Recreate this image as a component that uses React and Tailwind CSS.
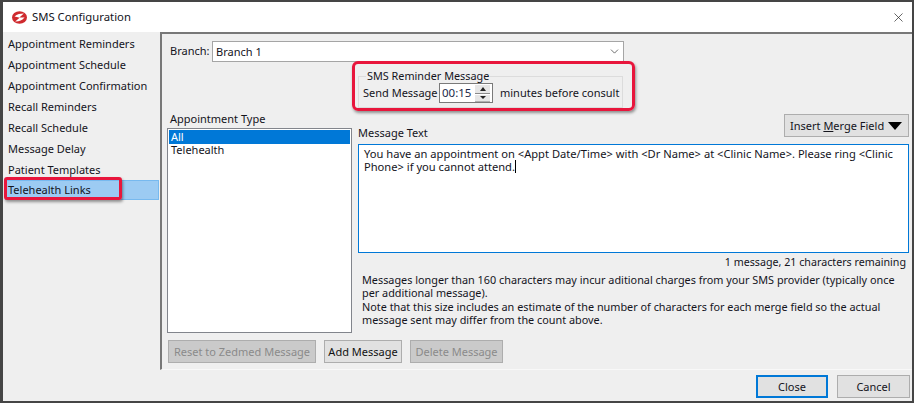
import React from "react";
import { X, ChevronDown } from "lucide-react";

const font = "font-['Noto_Sans',sans-serif] text-[11px] leading-[14px] text-[#14141c] whitespace-nowrap";

const navItems = [
  "Appointment Reminders",
  "Appointment Schedule",
  "Appointment Confirmation",
  "Recall Reminders",
  "Recall Schedule",
  "Message Delay",
  "Patient Templates",
  "Telehealth Links",
];

function Logo() {
  return (
    <svg width="15" height="13" viewBox="0 0 15 13" className="shrink-0">
      <ellipse cx="7.5" cy="6.5" rx="7.5" ry="6.2" fill="#cf2a2e" />
      <path d="M2.5 5.6 C5 3.2 8.5 2.6 11.8 2.6 L7.4 6.4 C9.2 6.6 11 6.6 12.6 6.2 C10.5 9.4 6.5 10.6 3.2 10.4 L7.6 6.8 C5.8 6.2 4 5.8 2.5 5.6 Z" fill="#fff" />
    </svg>
  );
}

function GrayButton({ className, children }) {
  return (
    <div className={`flex h-[23px] items-center justify-center border border-[#adadad] bg-[#cacaca] text-[#8a8a8a] ${className}`}>
      {children}
    </div>
  );
}

export default function App() {
  return (
    <div className={`relative flex h-[403px] w-[914px] flex-col overflow-hidden border-x-[2px] border-y-[2px] border-l-[3px] border-[#454545] bg-[#efefef] ${font}`}>
      <div className="flex h-[30px] shrink-0 items-center bg-white pl-[9px] pr-[5px]">
        <Logo />
        <span className="ml-[5px] pb-[1px] text-[11.3px]">SMS Configuration</span>
        <X className="ml-auto mr-[1px] text-[#222]" size={15} strokeWidth={1.1} />
      </div>

      <div className="flex h-[338px] shrink-0">
        <nav className="flex w-[157px] shrink-0 flex-col pt-px">
          {navItems.map((item, i) => (
            <div
              key={item}
              className={
                i === 7
                  ? "ml-[2px] mr-[1px] flex h-[20px] items-center border border-[#77b9ef] bg-[#9ccbf3] pl-[2px]"
                  : "flex h-[21px] items-center pl-[5px]"
              }
            >
              {item}
            </div>
          ))}
        </nav>

        <main className="flex-1 border-b border-l-2 border-t-2 border-[#787878] border-b-[#f8f8f8]">
          <div className="ml-[8px] mt-[7px] flex h-[21px] items-center">
            <span className="w-[42px] pb-[2px]">Branch:</span>
            <div className="flex h-[21px] w-[412px] items-center border border-[#a5a5a5] bg-white pl-[3px] pr-[2px]">
              Branch 1
              <ChevronDown className="ml-auto text-[#333]" size={13} strokeWidth={1.3} />
            </div>
          </div>

          <fieldset className="ml-[196px] mt-[7px] h-[39px] w-[265px] border border-[#dcdcdc] pl-[4px]">
            <legend className="ml-[3px] px-[1px] text-[10.85px]">SMS Reminder Message</legend>
            <div className="flex h-[20px] items-center">
              <span className="w-[76px] shrink-0">Send Message</span>
              <div className="flex h-[20px] w-[54px] shrink-0 items-center border border-[#7a7a7a] bg-white pl-[2px] pr-[2px]">
                <span className="text-[11.5px] text-[#1c2a4a]">00:15</span>
                <div className="ml-auto flex flex-col gap-px">
                  <div className="flex h-[9px] w-[15px] items-center justify-center border-b border-[#8a8a8a] bg-[#e6e6e6]">
                    <div className="h-0 w-0 border-x-[3.5px] border-b-[4px] border-x-transparent border-b-[#222]" />
                  </div>
                  <div className="flex h-[7px] w-[15px] items-center justify-center border-b border-[#b0b0b0] bg-[#e6e6e6]">
                    <div className="h-0 w-0 border-x-[3.5px] border-t-[3px] border-x-transparent border-t-[#222]" />
                  </div>
                </div>
              </div>
              <span className="ml-[7px]">minutes before consult</span>
            </div>
          </fieldset>

          <div className="flex pl-[5px]">
            <div className="mt-[4px] flex w-[185px] shrink-0 flex-col">
              <div className="pl-[3px]">Appointment Type</div>
              <div className="mt-[2px] h-[205px] border border-[#82858c] bg-white px-[1px] pt-px">
                <div className="flex h-[14px] items-center bg-[#0078d7] pl-[2px] text-white">All</div>
                <div className="flex h-[13px] items-center pb-px pl-[2px]">Telehealth</div>
              </div>
              <div className="mt-[7px] flex w-[340px] gap-[8px] pl-px">
                <GrayButton className="w-[148px]">Reset to Zedmed Message</GrayButton>
                <div className="flex h-[23px] w-[78px] items-center justify-center border border-[#adadad] bg-[#e1e1e1] text-[#111]">Add Message</div>
                <GrayButton className="w-[93px]">Delete Message</GrayButton>
              </div>
            </div>

            <div className="ml-[6px] mt-[6px] w-[551px]">
              <div className="flex h-[30px] items-start">
                <span className="mt-[12px]">Message Text</span>
                <div className="ml-auto flex h-[23px] w-[125px] items-center border border-[#adadad] bg-[#e1e1e1] pl-[5px]">
                  <span>Insert <span className="underline">M</span>erge Field</span>
                  <div className="ml-[4px] h-0 w-0 border-x-[7px] border-t-[8px] border-x-transparent border-t-black" />
                </div>
              </div>
              <div className="h-[109px] border border-[#0078d7] bg-white pl-[5px] pt-[2px] text-[11.15px] leading-[13px]">
                You have an appointment on &lt;Appt Date/Time&gt; with &lt;Dr Name&gt; at &lt;Clinic Name&gt;. Please ring &lt;Clinic
                <br />
                Phone&gt; if you cannot attend.
                <span className="inline-block h-[13px] w-px align-top bg-black" />
              </div>
              <div className="mt-[2px] pr-[3px] text-right text-[10.7px]">1 message, 21 characters remaining</div>
              <p className="mt-[4px] pl-[4px] text-[10.85px] leading-[13.4px]">
                Messages longer than 160 characters may incur aditional charges from your SMS provider (typically once
                <br />
                per additional message).
                <br />
                Note that this size includes an estimate of the number of characters for each merge field so the actual
                <br />
                message sent may differ from the count above.
              </p>
            </div>
          </div>
        </main>
      </div>

      <footer className="flex flex-1 items-start justify-end gap-[9px] pr-[2px] pt-[5px]">
        <div className="flex h-[23px] w-[72px] items-center justify-center border-2 border-[#0078d7] bg-[#e1e1e1]">Close</div>
        <div className="flex h-[23px] w-[73px] items-center justify-center border border-[#adadad] bg-[#e1e1e1]">Cancel</div>
      </footer>

      <div className="absolute left-[1px] top-[175px] h-[23px] w-[118px] rounded-[3px] border-[3px] border-[#e8163c] shadow-[1px_2px_3px_rgba(0,0,0,0.4)]" />
      <div className="absolute left-[349px] top-[59px] h-[50px] w-[283px] rounded-[6px] border-[3px] border-[#e8163c] shadow-[1px_2px_3px_rgba(0,0,0,0.4)]" />
    </div>
  );
}
